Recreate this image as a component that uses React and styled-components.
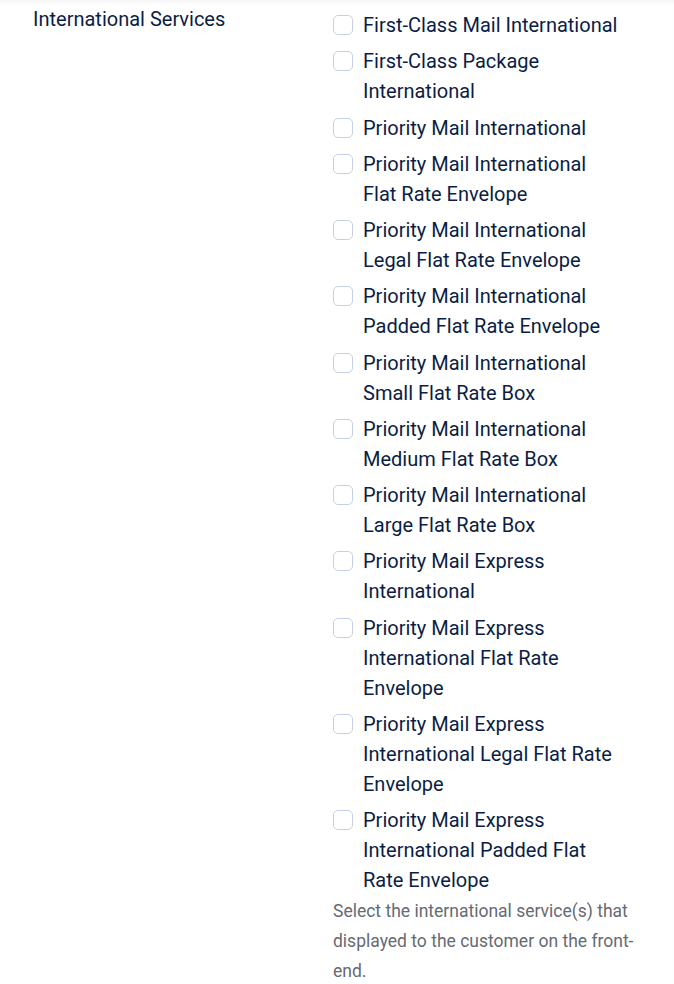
import React from "react";
import styled, { createGlobalStyle } from "styled-components";

const Global = createGlobalStyle`
  html, body { margin: 0; padding: 0; background: #fff; }
  body { font-family: Roboto, "Noto Sans", sans-serif; }
`;

const Page = styled.div`
  width: 674px;
  min-height: 984px;
  box-sizing: border-box;
  background: #fff;
  box-shadow: inset 0 4px 4px -2px rgba(0, 0, 0, 0.05);
  padding: 4px 0 0 33px;
`;

const Row = styled.div`
  display: grid;
  grid-template-columns: 300px 307px;
`;

const Label = styled.div`
  font-size: 20px;
  line-height: 30px;
  color: #0b1d45;
`;

const Field = styled.div`
  display: flex;
  flex-direction: column;
  padding-top: 6px;
`;

const Options = styled.div`
  display: flex;
  flex-direction: column;
  gap: 6.25px;
`;

const Option = styled.label`
  display: flex;
  align-items: flex-start;
  gap: 10px;
  font-size: 20px;
  line-height: 30px;
  color: #0b1d45;
  cursor: pointer;
`;

const Box = styled.span`
  flex: none;
  width: 20px;
  height: 20px;
  box-sizing: border-box;
  margin-top: 5px;
  border: 1px solid #c5d0e2;
  border-radius: 5px;
  background: #fff;
`;

const OptionText = styled.span`
  max-width: 258px;
`;

const Help = styled.p`
  margin: 1px 0 0;
  font-size: 17.5px;
  line-height: 30px;
  color: #666a73;
`;

const services = [
  "First-Class Mail International",
  "First-Class Package International",
  "Priority Mail International",
  "Priority Mail International Flat Rate Envelope",
  "Priority Mail International Legal Flat Rate Envelope",
  "Priority Mail International Padded Flat Rate Envelope",
  "Priority Mail International Small Flat Rate Box",
  "Priority Mail International Medium Flat Rate Box",
  "Priority Mail International Large Flat Rate Box",
  "Priority Mail Express International",
  "Priority Mail Express International Flat Rate Envelope",
  "Priority Mail Express International Legal Flat Rate Envelope",
  "Priority Mail Express International Padded Flat Rate Envelope",
];

export default function App() {
  return (
    <>
      <Global />
      <Page>
        <Row>
          <Label>International Services</Label>
          <Field>
            <Options>
              {services.map((s) => (
                <Option key={s}>
                  <Box />
                  <OptionText>{s}</OptionText>
                </Option>
              ))}
            </Options>
            <Help>
              Select the international service(s) that displayed to the customer on the front-end.
            </Help>
          </Field>
        </Row>
      </Page>
    </>
  );
}
